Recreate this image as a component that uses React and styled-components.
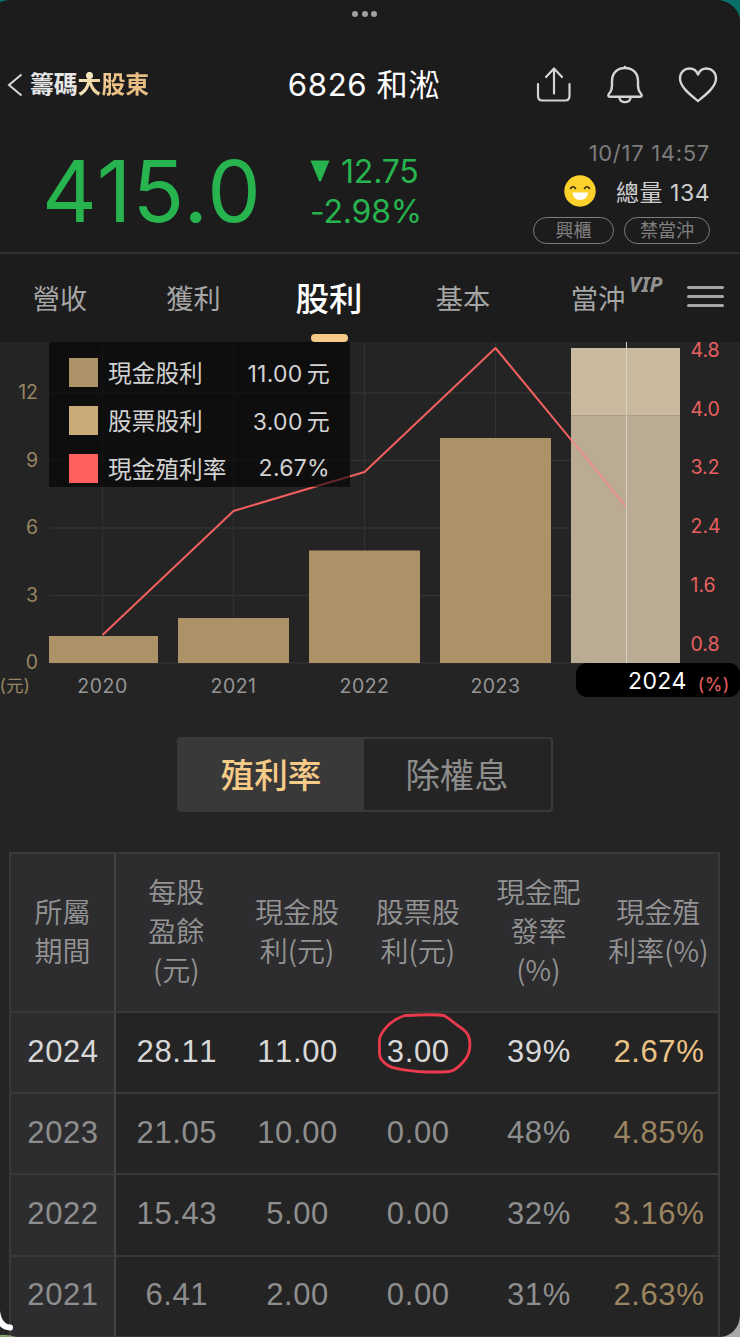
import styled, { createGlobalStyle } from "styled-components"

const years = [
    { year: "2020", x: 49, width: 109, cash: 1.2 },
    { year: "2021", x: 178, width: 111, cash: 2 },
    { year: "2022", x: 309, width: 111, cash: 5 },
    { year: "2023", x: 440, width: 111, cash: 10 },
]

const tickX = [102.5, 233.5, 364.5, 495.5]
const leftTicks = [12, 9, 6, 3, 0]
const rightTicks = ["4.8", "4.0", "3.2", "2.4", "1.6", "0.8"]
const BASE = 321
const UNIT = 22.5

const legend = [
    { color: "#ad9167", label: "現金股利", value: "11.00", unit: "元" },
    { color: "#c9ab79", label: "股票股利", value: "3.00", unit: "元" },
    { color: "#ff5f5f", label: "現金殖利率", value: "2.67%" },
]

const columns = [
    ["所屬", "期間"],
    ["每股", "盈餘", "(元)"],
    ["現金股", "利(元)"],
    ["股票股", "利(元)"],
    ["現金配", "發率", "(%)"],
    ["現金殖", "利率(%)"],
]

const rows = [
    ["2024", "28.11", "11.00", "3.00", "39%", "2.67%"],
    ["2023", "21.05", "10.00", "0.00", "48%", "4.85%"],
    ["2022", "15.43", "5.00", "0.00", "32%", "3.16%"],
    ["2021", "6.41", "2.00", "0.00", "31%", "2.63%"],
]

const App = () => {
    return <Backdrop>
        <GlobalStyle />
        <Window>
            <Handle><Dot /><Dot /><Dot /></Handle>
            <Nav />
            <Quote />
            <Tabs />
            <ChartArea>
                <Chart />
                <Legend />
                <YearPill>2024<Percent>(%)</Percent></YearPill>
            </ChartArea>
            <Switch>
                <SwitchItem $active>殖利率</SwitchItem>
                <SwitchItem>除權息</SwitchItem>
            </Switch>
            <Dividends />
        </Window>
        <Corner width="16" height="30" viewBox="0 0 16 30">
            <path d="M0 28 Q8 27 16 30 H0 Z" fill="#7f9a64" />
            <path d="M-3 4 Q-1 20 10 20.500" fill="none" stroke="#fff" strokeWidth="6" strokeLinecap="round" />
        </Corner>
    </Backdrop>
}

const Nav = () => {
    return <NavBar>
        <Back>
            <svg width="16" height="24" viewBox="0 0 16 24" fill="none" stroke="#d8d8d8" strokeWidth="2">
                <path d="M14.500 1.500 L2 12 L14.500 22.500" />
            </svg>
            <Brand>籌碼<Gold>大股東<Head /></Gold></Brand>
        </Back>
        <Title>6826 和淞</Title>
        <Actions>
            <svg width="36" height="38" viewBox="0 0 36 38" fill="none" stroke="#d4d4d4" strokeWidth="2.200" strokeLinecap="round" strokeLinejoin="round">
                <path d="M2 18 V30 Q2 34.500 6.500 34.500 H29 Q33.500 34.500 33.500 30 V18" />
                <path d="M18 27.500 V3 M10 11 L18 2.500 L26 11" />
            </svg>
            <svg width="38" height="40" viewBox="0 0 38 40" fill="none" stroke="#d4d4d4" strokeWidth="2.400" strokeLinecap="round" strokeLinejoin="round">
                <path d="M19 3 C11 3 6 8.500 6 16 V20.500 C6 24 5 26.500 3.200 28.500 C1.800 30.200 2 31.800 4 31.800 H34 C36 31.800 36.200 30.200 34.800 28.500 C33 26.500 32 24 32 20.500 V16 C32 8.500 27 3 19 3 Z" />
                <path d="M13.500 32.500 C13.500 38.700 24.500 38.700 24.500 32.500 M19 2 V2.500" />
            </svg>
            <svg width="40" height="38" viewBox="0 0 40 38" fill="none" stroke="#d4d4d4" strokeWidth="2.400" strokeLinejoin="round">
                <path d="M20 35 C14 30 2 21.500 2 12.500 C2 6 6.500 2.500 11.500 2.500 C15.500 2.500 18.500 4.500 20 8.500 C21.500 4.500 24.500 2.500 28.500 2.500 C33.500 2.500 38 6 38 12.500 C38 21.500 26 30 20 35 Z" />
            </svg>
        </Actions>
    </NavBar>
}

const Quote = () => {
    return <QuoteRow>
        <Price>415.0</Price>
        <Change>
            <Diff>
                <svg width="20" height="25" viewBox="0 0 20 25"><path d="M0.500 0.500 H19.500 L11.200 20.500 Q10 22.500 8.800 20.500 Z" fill="#27b44f" /></svg>
                12.75
            </Diff>
            <Rate>-2.98%</Rate>
        </Change>
        <Meta>
            <Time>10/17 14:57</Time>
            <Volume>
                <svg width="32" height="32" viewBox="0 0 32 32">
                    <circle cx="16" cy="16" r="15.700" fill="#fdd12c" />
                    <path d="M6.500 13.500 Q9 10 11.500 13.500 M20.500 13.500 Q23 10 25.500 13.500" fill="none" stroke="#2b2417" strokeWidth="1.600" strokeLinecap="round" />
                    <path d="M8.500 17.500 H24 Q23 25 16.200 25 Q9.500 25 8.500 17.500 Z" fill="#fff" />
                </svg>
                <span>總量 134</span>
            </Volume>
            <Tags>
                <Tag $width={81}>興櫃</Tag>
                <Tag $width={86}>禁當沖</Tag>
            </Tags>
        </Meta>
    </QuoteRow>
}

const Tabs = () => {
    return <TabBar>
        <Tab>營收</Tab>
        <Tab>獲利</Tab>
        <Tab $active>股利</Tab>
        <Tab>基本</Tab>
        <Tab>當沖<Vip>VIP</Vip></Tab>
        <Menu><Line /><Line /><Line /></Menu>
    </TabBar>
}

const Chart = () => {
    const line = [[102.5, 293], [233.5, 169], [364.5, 130], [495.5, 6], [571, 97.6]]
    return <Plot width="740" height="374" viewBox="0 0 740 374">
        <g stroke="#313131" strokeWidth="1.300">
            {leftTicks.map(t => <line key={t} x1="49" x2="680" y1={BASE - t * UNIT} y2={BASE - t * UNIT} />)}
            {tickX.map(x => <line key={x} x1={x} x2={x} y1="0" y2={BASE} />)}
        </g>
        <g fill="#ad9167">
            {years.map(d => <rect key={d.year} x={d.x} width={d.width} y={BASE - d.cash * UNIT} height={d.cash * UNIT} />)}
        </g>
        <rect x="571" y="6" width="109" height="67" fill="#c9b99f" />
        <rect x="571" y="73" width="109" height="248" fill="#b9ab94" />
        <path d="M571 73.500 H680" stroke="#a99b85" strokeWidth="1" />
        <polyline points={line.map(p => p.join(",")).join(" ")} fill="none" stroke="#f2605f" strokeWidth="2" strokeLinejoin="round" />
        <path d="M571 97.600 L626.500 165" stroke="#e8908a" strokeWidth="2" />
        <path d="M626.500 0 V321" stroke="#d6d0c4" strokeWidth="1" />
        {leftTicks.map(t => <LeftLabel key={t} x="38" y={BASE - t * UNIT + 6}>{t}</LeftLabel>)}
        {rightTicks.map((t, i) => <RightLabel key={t} x="690.500" y={15 + i * 58.7}>{t}</RightLabel>)}
        {years.map((d, i) => <YearLabel key={d.year} x={tickX[i]} y="350.500">{d.year}</YearLabel>)}
        <Unit x="-0.500" y="350">(元)</Unit>
    </Plot>
}

const Legend = () => {
    return <LegendBox>
        <LegendYear>2024</LegendYear>
        {legend.map(item => <LegendRow key={item.label}>
            <Swatch $color={item.color} />
            <span>{item.label}</span>
            <LegendValue>{item.value}{item.unit && <LegendUnit>{item.unit}</LegendUnit>}</LegendValue>
        </LegendRow>)}
    </LegendBox>
}

const Dividends = () => {
    return <Table>
        {columns.map((lines, i) => <HeadCell key={i} $first={i === 0}>
            {lines.map(l => <span key={l}>{l}</span>)}
        </HeadCell>)}
        {rows.map((row, r) => row.map((value, i) => <Cell key={`${r}-${i}`} $first={i === 0} $last={i === 5} $current={r === 0}>
            {value}
            {r === 0 && i === 3 && <Mark width="96" height="62" viewBox="0 0 96 62">
                <path d="M29 2.500 C48 1.500 61 1.500 67 2.500 C73 6 76 9 80 12 C86 16 92 20 92.500 27 C94 36 92 42 87 48 C82 54 77 58 72 58.500 C60 59.500 50 59 41 58.500 C30 57 18 57 11 52.500 C3 47 2 44 2.500 36 C2.500 28 1 25 7 17 C13 9 20 5 28 2.500" />
            </Mark>}
        </Cell>))}
    </Table>
}

const GlobalStyle = createGlobalStyle`
body {
    margin: 0;
    background: #1c1c1c;
    font-family: Inter, "Noto Sans CJK TC", sans-serif;
}

* {
    box-sizing: border-box;
}
`

const Backdrop = styled.div`
position: relative;
width: 740px;
height: 1337px;
overflow: hidden;
background: linear-gradient(#087068 50%, #aaa9a5 50%);
`

const Window = styled.div`
height: 1337px;
display: flex;
flex-direction: column;
overflow: hidden;
background: #242424;
border-radius: 14px 24px 20px 0 / 3px 22px 22px 0;
`

const Corner = styled.svg`
position: absolute;
left: 0;
bottom: 0;
`

const Handle = styled.div`
flex: none;
height: 56px;
padding: 11px 11px 0 0;
display: flex;
justify-content: center;
gap: 3.5px;
background: #1c1c1c;
`

const Dot = styled.i`
width: 6px;
height: 6px;
border-radius: 50%;
background: #a0a0a0;
`

const NavBar = styled.header`
flex: none;
height: 57px;
padding: 0 22px 0 7px;
display: grid;
grid-template-columns: 250px 214px 1fr;
align-items: center;
background: #1c1c1c;
`

const Back = styled.div`
display: flex;
align-items: center;
gap: 7px;
`

const Brand = styled.span`
font-size: 23.8px;
font-weight: 700;
line-height: 30px;
color: #e6e6e6;
`

const Gold = styled.span`
position: relative;
color: transparent;
background: linear-gradient(90deg, #f5e8be, #edc184 50%, #e6bc84);
background-clip: text;
`

const Head = styled.i`
position: absolute;
left: 8px;
top: 2px;
width: 7px;
height: 7px;
border-radius: 50%;
background: #f5e8be;
`

const Title = styled.h1`
margin: 0;
padding-bottom: 5px;
text-align: center;
font-size: 31.2px;
font-weight: 400;
letter-spacing: .6px;
white-space: nowrap;
color: #fff;
`

const Actions = styled.div`
display: flex;
justify-content: flex-end;
align-items: center;
gap: 34px;
`

const QuoteRow = styled.section`
flex: none;
height: 141px;
padding: 0 30px 0 42px;
display: flex;
background: #1c1c1c;
border-bottom: 2px solid #323232;
`

const Price = styled.div`
width: 268px;
padding-top: 27px;
font-size: 85px;
line-height: 103px;
letter-spacing: 1.4px;
color: #27b44f;
`

const Change = styled.div`
padding-top: 39px;
font-size: 32px;
line-height: 40px;
color: #27b44f;
`

const Diff = styled.div`
display: flex;
align-items: center;
gap: 11px;
letter-spacing: -.2px;
`

const Rate = styled.div`
letter-spacing: -.2px;
`

const Meta = styled.div`
margin-left: auto;
display: flex;
flex-direction: column;
align-items: flex-end;
`

const Time = styled.div`
padding-top: 26px;
font-size: 22px;
line-height: 28px;
letter-spacing: .7px;
color: #7c7c7c;
`

const Volume = styled.div`
height: 48px;
display: flex;
align-items: center;
gap: 20px;
font-size: 23px;
letter-spacing: .5px;
color: #cfcfcf;
`

const Tags = styled.div`
display: flex;
gap: 10px;
margin-top: 2px;
`

const Tag = styled.span`
width: ${({ $width }) => $width}px;
height: 27px;
border: 1px solid #7d7d7d;
border-radius: 14px;
text-align: center;
font-size: 18px;
line-height: 26px;
color: #808080;
`

const TabBar = styled.nav`
flex: none;
height: 88px;
display: grid;
grid-template-columns: 120px 147px 124px 144px 126px 79px;
background: #1c1c1c;
`

const Tab = styled.div`
position: relative;
text-align: center;
font-size: ${({ $active }) => $active ? 33.5 : 27.2}px;
font-weight: ${({ $active }) => $active ? 500 : 400};
line-height: ${({ $active }) => $active ? 90 : 91}px;
height: 88px;
color: ${({ $active }) => $active ? "#fff" : "#a6a6a6"};

&::after {
    content: "";
    display: ${({ $active }) => $active ? "block" : "none"};
    position: absolute;
    left: 44px;
    bottom: 0;
    width: 37px;
    height: 8px;
    border-radius: 4px;
    background: #f6ca87;
}
`

const Vip = styled.sup`
position: absolute;
left: 94px;
top: 18px;
font-family: "Noto Sans", sans-serif;
font-size: 21px;
font-style: italic;
font-weight: 700;
line-height: 24px;
color: #929292;
`

const Menu = styled.div`
padding: 32px 0 0 26px;
display: flex;
flex-direction: column;
gap: 6px;
`

const Line = styled.i`
width: 37px;
height: 3px;
border-radius: 2px;
background: #a6a6a6;
`

const ChartArea = styled.section`
flex: none;
position: relative;
height: 374px;
`

const Plot = styled.svg`
display: block;
`

const LeftLabel = styled.text`
font-size: 19.5px;
text-anchor: end;
fill: #978562;
`

const RightLabel = styled.text`
font-size: 19.5px;
fill: #e8605f;
`

const YearLabel = styled.text`
font-size: 19.5px;
letter-spacing: .5px;
text-anchor: middle;
fill: #959595;
`

const Unit = styled.text`
font-size: 17.5px;
fill: #978562;
`

const LegendBox = styled.div`
position: absolute;
left: 49px;
top: 0;
width: 301px;
height: 145px;
padding: 0 20px;
overflow: hidden;
background: rgba(0, 0, 0, .6);
color: #d2d2d2;
`

const LegendYear = styled.div`
height: 6px;
margin: -22px 0 22px 8px;
font-size: 22px;
line-height: 26px;
`

const LegendRow = styled.div`
height: 48px;
display: flex;
align-items: center;
gap: 10px;
font-size: 23.7px;
`

const Swatch = styled.i`
width: 29px;
height: 29px;
background: ${({ $color }) => $color};
`

const LegendValue = styled.span`
margin-left: auto;
font-size: 23px;
letter-spacing: .3px;
`

const LegendUnit = styled.span`
margin-left: 4px;
`

const YearPill = styled.div`
position: absolute;
left: 576px;
top: 321px;
width: 164px;
height: 34px;
padding-left: 52px;
display: flex;
border-radius: 11px;
background: #000;
font-size: 23px;
line-height: 36px;
letter-spacing: .4px;
color: #fff;
`

const Percent = styled.span`
margin-left: 11px;
font-size: 18px;
line-height: 43px;
color: #e8605f;
`

const Switch = styled.div`
flex: none;
width: 376px;
height: 75px;
margin: 21px 0 0 177px;
display: grid;
grid-template-columns: 185px 1fr;
border: 2px solid #393939;
border-radius: 4px;
`

const SwitchItem = styled.div`
height: 71px;
padding-right: 1px;
text-align: center;
font-size: ${({ $active }) => $active ? 33.7 : 34.3}px;
font-weight: ${({ $active }) => $active ? 500 : 400};
line-height: 73px;
color: ${({ $active }) => $active ? "#f6ca87" : "#8d8d8d"};
background: ${({ $active }) => $active ? "#393939" : "transparent"};
`

const Table = styled.div`
flex: none;
width: 711px;
margin: 40px 0 0 9px;
display: grid;
grid-template-columns: 105px repeat(4, 120.7px) 1fr;
grid-template-rows: 159px repeat(4, 81.2px);
border: 2px solid #393939;
`

const HeadCell = styled.div`
display: flex;
flex-direction: column;
align-items: center;
justify-content: center;
padding-bottom: 4px;
font-family: "Noto Sans CJK TC", sans-serif;
font-size: 28px;
font-weight: 350;
line-height: 39px;
color: #949494;
background: #2d2d2f;
border-bottom: 2px solid #393939;
border-right: ${({ $first }) => $first ? "2px solid #434343" : "none"};
`

const Cell = styled.div`
position: relative;
display: flex;
align-items: center;
justify-content: center;
padding: 0 0 2px 1px;
font-family: "Liberation Sans", Arial, sans-serif;
font-size: 31px;
font-kerning: none;
letter-spacing: .6px;
color: ${({ $last, $current }) => $last ? ($current ? "#ebc385" : "#9c8561") : ($current ? "#d8d8d8" : "#8e8e8e")};
background: ${({ $first }) => $first ? "#2d2d2f" : "transparent"};
border-bottom: 2px solid #393939;
border-right: ${({ $first }) => $first ? "2px solid #434343" : "none"};
`

const Mark = styled.svg`
position: absolute;
left: 20px;
top: 0;
fill: none;
stroke: #ea3a4b;
stroke-width: 2.8px;
stroke-linecap: round;
`

export default App
